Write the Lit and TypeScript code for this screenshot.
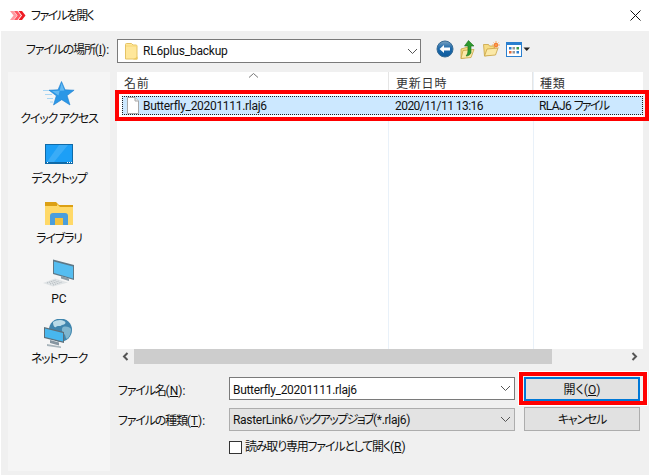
import { LitElement, html, css, svg } from "lit";
import { customElement } from "lit/decorators.js";

const chevDown = html`<svg width="11" height="7" viewBox="0 0 11 7"><path d="M1 1l4.500 4.500L10 1" fill="none" stroke="#555" stroke-width="1"/></svg>`;

const starIcon = html`<svg width="32" height="26" viewBox="0 0 32 26"><g stroke="#a9d6f3" stroke-width="1"><path d="M0 9.500h8M2 13.500h7M4 17.500h6M7 21h3"/></g><path d="M18.500 .5l3.600 8.300 9 .4-7 5.400 2.900 9.400-8.300-5.300-8.200 5.300 2.800-9.200L6 9.200l9-.4z" fill="#2b97e6" stroke="#1f7fd0" stroke-width=".6"/><path d="M18.500 2l2.900 7.400L9 10l6.500 4.500z" fill="#63b9f2"/></svg>`;

const desktopIcon = html`<svg width="28" height="20" viewBox="0 0 28 20"><rect x=".5" y=".5" width="27" height="19" fill="#1c9ff6" stroke="#0f6aa8"/><path d="M14 1h9L9 18H2z" fill="#4fb6f8" opacity=".6"/><path d="M1 18.500h27" stroke="#0f6aa8"/><path d="M2 18.500h1M22 18.500h1M24 18.500h1M26 18.500h1" stroke="#fff"/></svg>`;

const libraryIcon = html`<svg width="28" height="24" viewBox="0 0 28 24"><path d="M0 1h11l3 3h14v3H0z" fill="#dca014"/><path d="M0 3h12l3 3h13v18H0z" fill="#ffd968"/><path d="M0 3.500h12" stroke="#dca014" stroke-width="3"/><path d="M5 24v-9a3 3 0 0 1 3-3h12a3 3 0 0 1 3 3v9h-5v-7h-8v7z" fill="#4a9edc"/><rect x="10" y="17" width="8" height="7" fill="#f3c23c"/></svg>`;

const pcIcon = html`<svg width="32" height="28" viewBox="0 0 32 28"><path d="M10 .5L31 6v15L10 15z" fill="#5f7886"/><path d="M11 2.500l19 5v12L11 14z" fill="#55bdf0"/><path d="M18 17l8 2.500v2.500l-8-2.500z" fill="#8a9aa4"/><path d="M0 24l12-4.500 13 4L10 27.500z" fill="#dfe3e5"/><path d="M4 24l9-3M7 25l9-3M10 26l9-3" stroke="#aeb5ba" stroke-width="1" stroke-dasharray="1 1"/></svg>`;

const netIcon = html`<svg width="30" height="29" viewBox="0 0 30 29"><circle cx="16.500" cy="11" r="11.500" fill="#3f85ad"/><path d="M9 3c3-2 8-3 11-1 3 1 1 4-2 4-2 2-5 0-6 2-2 1-3-2-3-5z" fill="#b9dbe8"/><path d="M19 8c3-1 7 0 8 2 0 3-1 8-4 10-2-1-1-4-3-5-2-2-3-5-1-7z" fill="#7fb6cf"/><path d="M0 8l20 5v11L0 19z" fill="#5d6e78"/><path d="M1 9.500l18 4.500v8.500L1 18z" fill="#48b7ee"/><path d="M6 21l9 2.500v3L6 24z" fill="#8695a0"/><path d="M3 25l14 2.500V29L3 27z" fill="#a8b4bb"/></svg>`;

const pathFolder = html`<svg width="13" height="17" viewBox="0 0 13 17"><path d="M.5 1.500a1 1 0 0 1 1-1h5l1.500 1.500h3a1 1 0 0 1 1 1v13H.5z" fill="#ffe79a" stroke="#e5c365"/><path d="M1 3h11" stroke="#f7d777"/><path d="M8 16.500l4.500-3v3z" fill="#ecc95e"/></svg>`;

const backIcon = html`<svg width="18" height="18" viewBox="0 0 18 18"><defs><linearGradient id="bk" x1="0" y1="0" x2="0" y2="1"><stop offset="0" stop-color="#7ba2bf"/><stop offset=".45" stop-color="#1d69ab"/><stop offset="1" stop-color="#0c5b9e"/></linearGradient></defs><circle cx="9" cy="9" r="8" fill="url(#bk)" stroke="#386b94"/><path d="M3.500 9L8 5v2.500h6v3H8V13z" fill="#fff"/></svg>`;

const upIcon = html`<svg width="15" height="19" viewBox="0 0 15 19"><path d="M1 9l7-2v10l-7 1.500z" fill="#f6dc85" stroke="#c9a343" stroke-width=".8"/><path d="M1 18.500l2-8 11-1-3 8z" fill="#fbe9a8" stroke="#c9a343" stroke-width=".8"/><path d="M8.500 .5L14 6h-3v7c-1 2-3 3-5 3 1-1 2-3 2-6V6H4.500z" fill="#2d9a2d" stroke="#1d6e1d" stroke-width=".6"/></svg>`;

const newIcon = html`<svg width="17" height="16" viewBox="0 0 17 16"><path d="M.5 3.500h5l1 1.500h5v8l-10 2z" fill="#f6dc85" stroke="#c9a343" stroke-width=".8"/><path d="M1.500 15l2.500-7 11-1-2.500 7z" fill="#fbe9a8" stroke="#c9a343" stroke-width=".8"/><circle cx="13" cy="4" r="2.200" fill="#f2622c"/><path d="M13 0v8M9 4h8M10.500 1.500l5 5M15.500 1.500l-5 5" stroke="#f7a24c" stroke-width=".8"/></svg>`;

const viewIcon = html`<svg width="24" height="15" viewBox="0 0 24 15"><rect x=".5" y=".5" width="15" height="14" fill="#fff" stroke="#2a7fcf"/><rect x="1" y="1" width="14" height="2" fill="#2a7fcf"/><g>${[["#2a7fcf",3,5],["#999",6.5,5],["#3a9a4a",10.5,5],["#e2683a",3,9],["#999",6.5,9],["#2a7fcf",10.5,9]].map(([c,x,y]) => svg`<rect x="${x}" y="${y}" width="2.500" height="2.500" fill="${c}"/>`)}</g><path d="M17.500 5.500h6.500l-3.250 3.500z" fill="#222"/></svg>`;

const appIcon = html`<svg width="16" height="9" viewBox="0 0 16 9"><path d="M0 0h3.500l3.500 4.500L3.500 9H0l3.500-4.500z" fill="#ff9aa0"/><path d="M4 0h3.500l3.500 4.500L7.500 9H4l3.500-4.500z" fill="#ff5560"/><path d="M8.500 0H12l3.500 4.500L12 9H8.500L12 4.500z" fill="#ee1c25"/></svg>`;

const fileIcon = html`<svg width="12" height="17" viewBox="0 0 12 17"><path d="M.5.500h7.500l3.500 3.500v12.500H.5z" fill="#fff" stroke="#a8a8a8"/><path d="M8 .5v3.500h3.500" fill="#eee" stroke="#a8a8a8"/></svg>`;

@customElement("app-root")
export class AppRoot extends LitElement {
  static styles = css`
    :host {
      display: block;
      position: relative;
      width: 650px;
      height: 476px;
      overflow: hidden;
      background: #fff;
      color: #111;
      font: 12px/16px Roboto, "Noto Sans CJK JP", sans-serif;
      font-feature-settings: "palt";
    }
    .k { letter-spacing: -1.2px; }
    .title {
      height: 31px;
      display: flex;
      align-items: center;
      padding-left: 10px;
      gap: 5px;
    }
    .title .k { letter-spacing: -1.5px; }
    .title .x { margin-left: auto; margin-right: 9px; display: flex; }
    .body {
      margin: 0 1px;
      height: 444px;
      background: #f0f0f0;
      display: flex;
      flex-direction: column;
    }
    .pathrow { height: 41px; display: flex; align-items: flex-start; padding-top: 8px; box-sizing: border-box; }
    .pathlabel { width: 100px; padding-left: 25px; line-height: 23px; box-sizing: border-box; flex: none; margin-right: 16px; white-space: nowrap; }
    .pathbox {
      width: 304px; height: 24px; box-sizing: border-box;
      border: 1px solid #7a7a7a; background: #fff;
      display: flex; align-items: center; padding: 0 2px 0 7px; gap: 5px;
      letter-spacing: -0.2px;
    }
    .pathbox span { flex: 1; }
    .tools { display: flex; align-items: center; margin-left: 15px; height: 20px; }
    .tools > svg { flex: none; }
    .gap6 { width: 6px; }
    .gap8 { width: 8px; }
    .main { display: flex; height: 399px; }
    .side {
      width: 102px; margin-left: 7px; margin-right: 7px; background: #f5f5f5; flex: none;
      display: flex; flex-direction: column; align-items: center;
      box-sizing: border-box; padding-top: 7px;
    }
    .nav { height: 60px; display: flex; flex-direction: column; align-items: center; white-space: nowrap; }
    .nav .ic { height: 29px; display: flex; align-items: flex-end; }
    .nav .lb { margin-top: 3px; }
    .p1 .ic { padding-bottom: 1px; height: 28px; }
    .p3 .ic { padding-bottom: 3px; height: 26px; }
    .p4 .ic { padding-bottom: 4px; height: 25px; }
    .col { width: 526px; display: flex; flex-direction: column; }
    .list { height: 277px; background: #fff; position: relative; display: flex; flex-direction: column; }
    .cols { position: absolute; left: 271px; top: 0; bottom: 0; width: 144px; border-left: 1px solid #e9f1f9; border-right: 1px solid #e9f1f9; }
    .head { height: 24px; display: grid; grid-template-columns: 271px 144px 1fr; position: relative; }
    .head div { padding: 4px 0 0 7px; line-height: 16px; letter-spacing: 0.8px; color: #333; border-left: 1px solid #e5e5e5; }
    .head div:first-child { border-left: 0; }
    .sort { position: absolute; left: 131px; top: 0; display: flex; }
    .row {
      margin-left: 5px; height: 19px; box-sizing: border-box; background: #cce8ff;
      outline: 1px dotted #222; outline-offset: -1px; letter-spacing: -0.3px;
      display: grid; grid-template-columns: 266px 144px 1fr; align-items: center; position: relative;
    }
    .row div { padding-left: 7px; white-space: nowrap; display: flex; align-items: center; }
    .row div:first-child { padding-left: 5px; gap: 4px; }
    .row .date { letter-spacing: -0.55px; }
    .row .type { letter-spacing: -0.6px; }
    .row .type .k { letter-spacing: -1.7px; }
    .hscroll { height: 15px; background: #f0f0f0; display: flex; align-items: center; }
    .arrow { width: 17px; display: flex; justify-content: center; flex: none; }
    .thumb { height: 15px; width: 418px; background: #cdcdcd; flex: none; }
    .hscroll .end { margin-left: auto; }
    .form {
      display: grid; grid-template-columns: 112px 286px 125px;
      grid-template-rows: 24px 24px 20px; row-gap: 6px;
      margin-top: 13px; align-items: center;
    }
    .label { padding: 4px 0 0 1px; white-space: nowrap; }
    .u { text-decoration: underline; text-underline-offset: 1px; }
    .field {
      height: 23px; box-sizing: border-box; border: 1px solid #7a7a7a; background: #fff;
      display: flex; align-items: center; justify-content: space-between; padding: 2px 3px 0 3px;
      white-space: nowrap; letter-spacing: -0.3px; align-self: start;
    }
    .field svg { margin-top: -2px; }
    .field.dis { background: #e3e3e3; border: 1px solid #adadad; align-self: end; padding-top: 1px; }
    .field.dis .k { letter-spacing: -1.6px; }
    .btn {
      margin-left: 9px; width: 116px; height: 24px; box-sizing: border-box;
      border: 1px solid #adadad; background: #e1e1e1;
      display: flex; align-items: center; justify-content: center; white-space: pre;
    }
    .btn.low { padding-top: 2px; }
    .btn.primary { border: 2px solid #0078d7; }
    .check { grid-column: 2 / 4; display: flex; align-items: center; gap: 3px; white-space: nowrap; }
    .box { width: 13px; height: 13px; box-sizing: border-box; border: 1px solid #333; background: #fff; flex: none; }
    .red { position: absolute; border: 4px solid #f00; box-sizing: border-box; pointer-events: none; }
    .red.r1 { left: 115px; top: 90px; width: 534px; height: 31px; }
    .red.r2 { left: 519px; top: 372px; width: 128px; height: 33px; }
    .halo { position: absolute; left: 518px; top: 371px; width: 130px; height: 35px; border: 1px solid #fff; box-sizing: border-box; pointer-events: none; }
  `;

  render() {
    return html`
      <div class="title">
        ${appIcon}<span class="k">ファイルを開く</span>
        <span class="x"><svg width="11" height="11" viewBox="0 0 11 11"><path d="M.5.5l10 10M10.500.5l-10 10" stroke="#111" fill="none"/></svg></span>
      </div>
      <div class="body">
        <div class="pathrow">
          <div class="pathlabel"><span class="k">ファイルの場所</span>(<span class="u">I</span>):</div>
          <div class="pathbox">${pathFolder}<span>RL6plus_backup</span>${chevDown}</div>
          <div class="tools">
            ${backIcon}<span class="gap6"></span>${upIcon}<span class="gap8"></span>${newIcon}<span class="gap6"></span>${viewIcon}
          </div>
        </div>
        <div class="main">
          <div class="side">
            <div class="nav p1"><div class="ic">${starIcon}</div><div class="lb k">クイック アクセス</div></div>
            <div class="nav p4"><div class="ic">${desktopIcon}</div><div class="lb k">デスクトップ</div></div>
            <div class="nav p3"><div class="ic">${libraryIcon}</div><div class="lb k">ライブラリ</div></div>
            <div class="nav p1"><div class="ic">${pcIcon}</div><div class="lb">PC</div></div>
            <div class="nav"><div class="ic">${netIcon}</div><div class="lb k">ネットワーク</div></div>
          </div>
          <div class="col">
            <div class="list">
              <div class="cols"></div>
              <div class="head">
                <div>名前</div><div>更新日時</div><div>種類</div>
                <span class="sort"><svg width="11" height="7" viewBox="0 0 11 7"><path d="M1 5.500l4.500-4 4.500 4" fill="none" stroke="#777"/></svg></span>
              </div>
              <div class="row">
                <div>${fileIcon}<span>Butterfly_20201111.rlaj6</span></div>
                <div class="date">2020/11/11 13:16</div>
                <div class="type"><span>RLAJ6&nbsp;</span><span class="k">ファイル</span></div>
              </div>
            </div>
            <div class="hscroll">
              <span class="arrow"><svg width="7" height="9" viewBox="0 0 7 9"><path d="M5.500 1L2 4.500 5.500 8" fill="none" stroke="#555" stroke-width="2"/></svg></span>
              <div class="thumb"></div>
              <span class="arrow end"><svg width="7" height="9" viewBox="0 0 7 9"><path d="M1.500 1L5 4.500 1.500 8" fill="none" stroke="#555" stroke-width="2"/></svg></span>
            </div>
            <div class="form">
              <div class="label"><span class="k">ファイル名</span>(<span class="u">N</span>):</div>
              <div class="field"><span>Butterfly_20201111.rlaj6</span>${chevDown}</div>
              <div class="btn primary low"><span>開く(<span class="u">O</span>)</span></div>
              <div class="label"><span class="k">ファイルの種類</span>(<span class="u">T</span>):</div>
              <div class="field dis"><span>RasterLink6<span class="k">バックアップジョブ</span>(*.rlaj6)</span>${chevDown}</div>
              <div class="btn low"><span class="k">キャンセル</span></div>
              <div></div>
              <div class="check"><span class="box"></span><span><span class="k">読み取り専用ファイルとして開く</span>(<span class="u">R</span>)</span></div>
            </div>
          </div>
        </div>
      </div>
      <div class="red r1"></div>
      <div class="halo"></div>
      <div class="red r2"></div>
    `;
  }
}
